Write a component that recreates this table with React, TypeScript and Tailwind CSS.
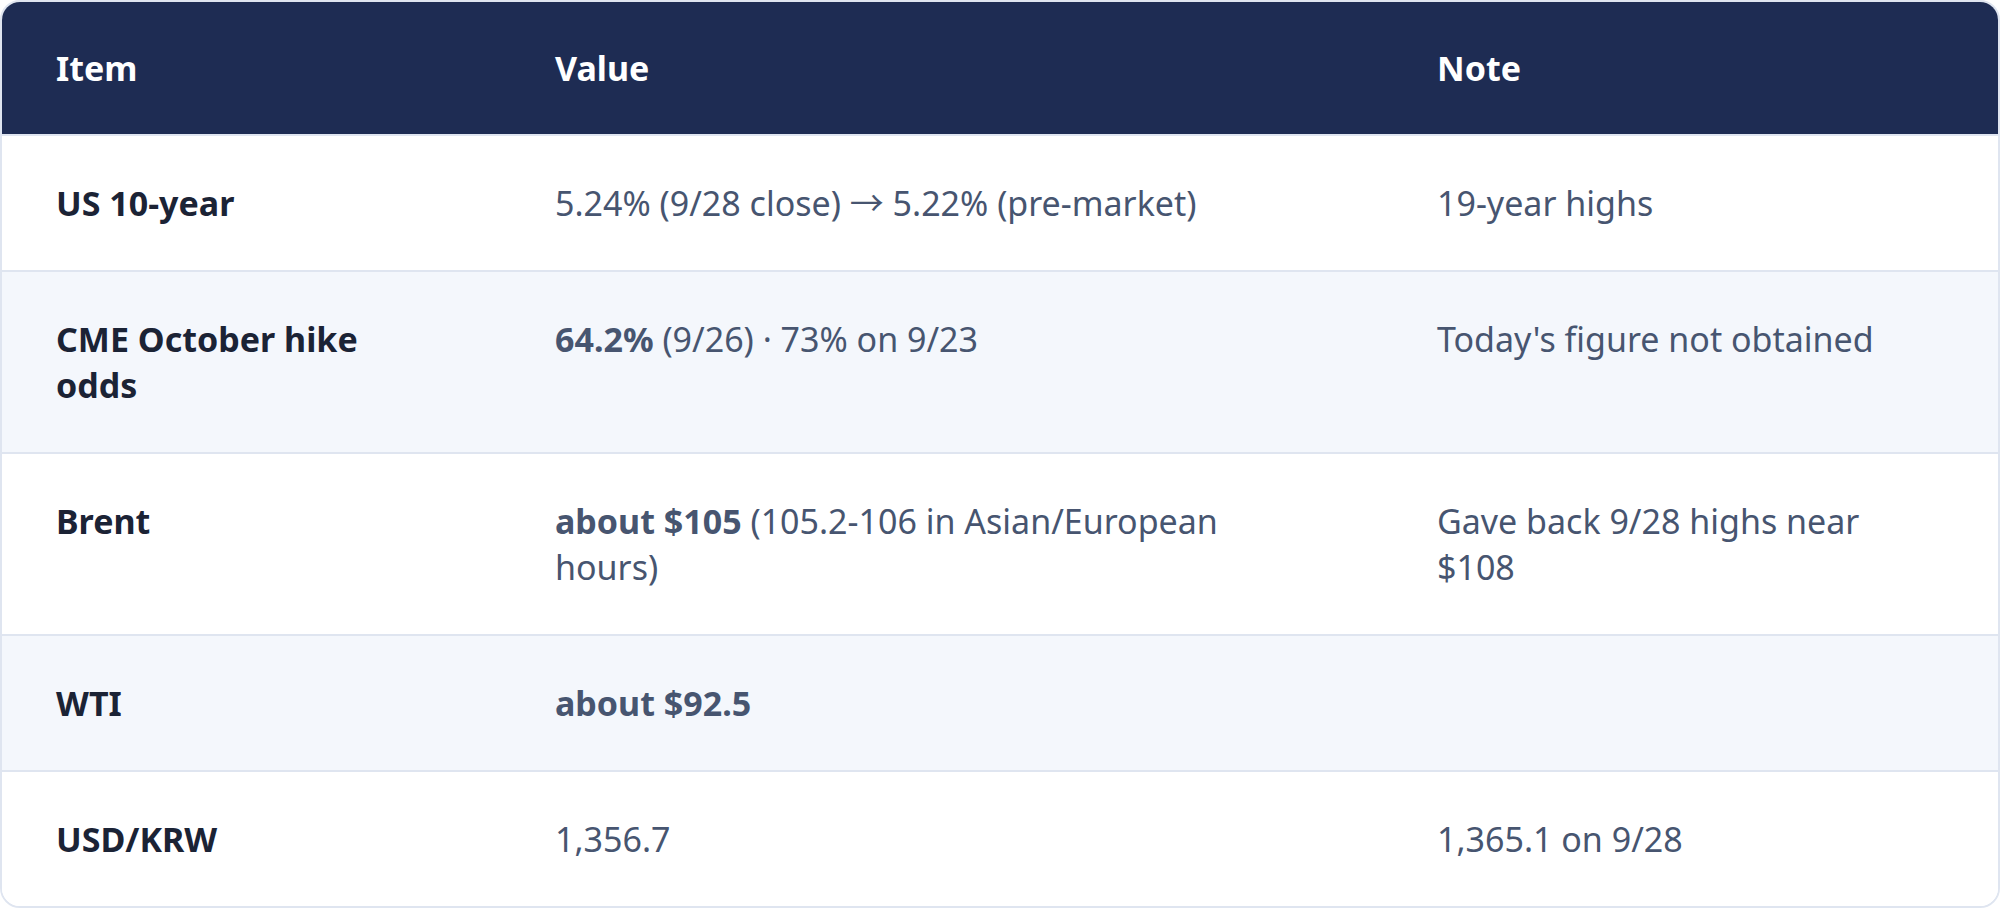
import React from "react";

type Row = {
  item: string;
  value: React.ReactNode;
  note: React.ReactNode;
};

const rows: Row[] = [
  {
    item: "US 10-year",
    value: "5.24% (9/28 close) → 5.22% (pre-market)",
    note: "19-year highs",
  },
  {
    item: "CME October hike odds",
    value: (
      <>
        <strong className="font-bold">64.2%</strong> (9/26) · 73% on 9/23
      </>
    ),
    note: "Today's figure not obtained",
  },
  {
    item: "Brent",
    value: (
      <>
        <strong className="font-bold">about $105</strong> (105.2-106 in Asian/European hours)
      </>
    ),
    note: "Gave back 9/28 highs near $108",
  },
  {
    item: "WTI",
    value: <strong className="font-bold">about $92.5</strong>,
    note: "",
  },
  {
    item: "USD/KRW",
    value: "1,356.7",
    note: "1,365.1 on 9/28",
  },
];

export default function App() {
  return (
    <div
      className="w-[2000px] bg-white"
      style={{ fontFamily: '"Noto Sans", "Noto Sans CJK KR", sans-serif' }}
    >
      <div className="overflow-hidden rounded-[20px] border-2 border-[#dfe5f0]">
        <table className="w-full table-fixed border-collapse text-[34px] leading-[46px]">
          <thead>
            <tr className="bg-[#1e2c53] text-white">
              <th className="w-[499px] px-[54px] py-[43px] text-left font-bold">Item</th>
              <th className="w-[882px] px-[54px] py-[43px] text-left font-bold">Value</th>
              <th className="px-[54px] py-[43px] text-left font-bold">Note</th>
            </tr>
          </thead>
          <tbody>
            {rows.map((row, i) => (
              <tr
                key={row.item}
                className={`border-t-2 border-[#dfe5f0] align-top ${
                  i % 2 === 1 ? "bg-[#f4f7fc]" : "bg-white"
                }`}
              >
                <td className="px-[54px] py-[44px] font-bold text-[#1b2335]">
                  <div className="w-[370px]">{row.item}</div>
                </td>
                <td className="px-[54px] py-[44px] text-[#475570]">
                  <div className="w-[730px]">{row.value}</div>
                </td>
                <td className="px-[54px] py-[44px] text-[#475570]">
                  <div className="w-[470px]">{row.note}</div>
                </td>
              </tr>
            ))}
          </tbody>
        </table>
      </div>
    </div>
  );
}
